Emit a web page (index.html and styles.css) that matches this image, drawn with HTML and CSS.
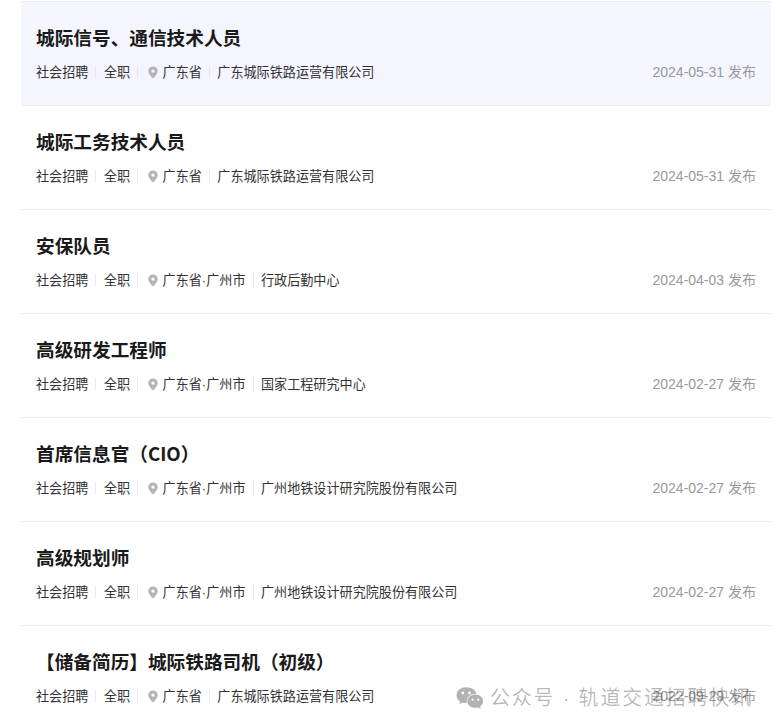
FILE: index.html
```html
<!DOCTYPE html>
<html lang="zh">
<head>
<meta charset="utf-8">
<title>职位列表</title>
<link rel="stylesheet" href="styles.css">
</head>
<body>
<svg class="defs" width="0" height="0"><defs><symbol id="pin" viewBox="0 0 12 13"><path fill="#b4b4b4" fill-rule="evenodd" d="M6 .4a4.700 4.700 0 0 1 4.700 4.700c0 2.700-2.700 5.600-4.700 7.500C4 10.700 1.300 7.800 1.300 5.100A4.700 4.700 0 0 1 6 .4zm0 3a1.700 1.700 0 1 0 0 3.400 1.700 1.700 0 0 0 0-3.400z"/></symbol></defs></svg>
<main class="list">
  <article class="job active">
    <h2 class="title">城际信号、通信技术人员</h2>
    <div class="meta"><span class="tag">社会招聘</span><i class="sep"></i><span class="tag">全职</span><i class="sep"></i><svg class="pin"><use href="#pin"/></svg><span class="tag">广东省</span><i class="sep"></i><span class="tag">广东城际铁路运营有限公司</span><span class="date">2024-05-31 发布</span></div>
  </article>
  <article class="job">
    <h2 class="title">城际工务技术人员</h2>
    <div class="meta"><span class="tag">社会招聘</span><i class="sep"></i><span class="tag">全职</span><i class="sep"></i><svg class="pin"><use href="#pin"/></svg><span class="tag">广东省</span><i class="sep"></i><span class="tag">广东城际铁路运营有限公司</span><span class="date">2024-05-31 发布</span></div>
  </article>
  <article class="job">
    <h2 class="title">安保队员</h2>
    <div class="meta"><span class="tag">社会招聘</span><i class="sep"></i><span class="tag">全职</span><i class="sep"></i><svg class="pin"><use href="#pin"/></svg><span class="tag">广东省<span class="dot">·</span>广州市</span><i class="sep"></i><span class="tag">行政后勤中心</span><span class="date">2024-04-03 发布</span></div>
  </article>
  <article class="job">
    <h2 class="title">高级研发工程师</h2>
    <div class="meta"><span class="tag">社会招聘</span><i class="sep"></i><span class="tag">全职</span><i class="sep"></i><svg class="pin"><use href="#pin"/></svg><span class="tag">广东省<span class="dot">·</span>广州市</span><i class="sep"></i><span class="tag">国家工程研究中心</span><span class="date">2024-02-27 发布</span></div>
  </article>
  <article class="job">
    <h2 class="title">首席信息官（CIO）</h2>
    <div class="meta"><span class="tag">社会招聘</span><i class="sep"></i><span class="tag">全职</span><i class="sep"></i><svg class="pin"><use href="#pin"/></svg><span class="tag">广东省<span class="dot">·</span>广州市</span><i class="sep"></i><span class="tag">广州地铁设计研究院股份有限公司</span><span class="date">2024-02-27 发布</span></div>
  </article>
  <article class="job">
    <h2 class="title">高级规划师</h2>
    <div class="meta"><span class="tag">社会招聘</span><i class="sep"></i><span class="tag">全职</span><i class="sep"></i><svg class="pin"><use href="#pin"/></svg><span class="tag">广东省<span class="dot">·</span>广州市</span><i class="sep"></i><span class="tag">广州地铁设计研究院股份有限公司</span><span class="date">2024-02-27 发布</span></div>
  </article>
  <article class="job">
    <h2 class="title">【储备简历】城际铁路司机（初级）</h2>
    <div class="meta"><span class="tag">社会招聘</span><i class="sep"></i><span class="tag">全职</span><i class="sep"></i><svg class="pin"><use href="#pin"/></svg><span class="tag">广东省</span><i class="sep"></i><span class="tag">广东城际铁路运营有限公司</span><span class="date">2022-09-29 发布</span></div>
  </article>
</main>
<div class="watermark">
  <svg class="wechat" viewBox="0 0 30 24"><path fill="#b2b2b2" d="M11 1C5.200 1 .5 4.800.5 9.500c0 2.700 1.500 5 3.900 6.600l-1 3 3.500-1.800c1.200.4 2.600.6 4 .6h.8a7 7 0 0 1-.3-2c0-4.500 4.300-8 9.600-8h.8C20.900 4 16.400 1 11 1z"/><path fill="#b2b2b2" d="M20.800 8.900c-4.800 0-8.700 3.200-8.700 7.100s3.900 7.100 8.700 7.100c1 0 2-.1 2.900-.4l2.900 1.500-.8-2.500c2-1.300 3.200-3.400 3.200-5.700 0-3.900-3.400-7.100-8.200-7.100z"/><circle cx="7.400" cy="7.200" r="1.500" fill="#fff"/><circle cx="14.400" cy="7.200" r="1.500" fill="#fff"/><circle cx="17.800" cy="14.400" r="1.200" fill="#fff"/><circle cx="23.800" cy="14.400" r="1.200" fill="#fff"/></svg>
  <span class="wm-text">公众号<span class="wm-dot"> · </span>轨道交通招聘快讯</span>
</div>
</body>
</html>
```

FILE: styles.css
```css
html, body {
  margin: 0;
  padding: 0;
  background: #fff;
}
body {
  height: 728px;
  overflow: hidden;
  position: relative;
  font-family: "Noto Sans CJK SC", "Liberation Sans", sans-serif;
}
.defs {
  position: absolute;
}
.list {
  margin: 1px 6px 0 21px;
  border-top: 1px solid #eeeeee;
}
.job {
  box-sizing: border-box;
  height: 104px;
  padding: 20px 15px 0;
  border-bottom: 1px solid #eeeeee;
}
.job.active {
  background: #f4f5ff;
}
.title {
  margin: 0;
  font-size: 18.67px;
  line-height: 30px;
  font-weight: 700;
  color: #1a1a1a;
}
.meta {
  display: flex;
  align-items: center;
  height: 20px;
  margin-top: 10px;
  font-size: 13.1px;
  line-height: 20px;
  color: #333;
}
.dot {
  font-family: "Liberation Sans", sans-serif;
}
.sep {
  width: 1px;
  height: 12px;
  margin: 0 7.5px 0 7px;
  background: #e8e8e8;
}
.pin {
  width: 12px;
  height: 13px;
  margin: 0 4px 0 1px;
}
.date {
  margin-left: auto;
  font-family: "Liberation Sans", "Noto Sans CJK SC", sans-serif;
  font-size: 14px;
  color: #999;
}
.watermark {
  position: absolute;
  left: 456px;
  top: 685px;
  display: flex;
  align-items: center;
  gap: 6px;
  height: 24px;
}
.wechat {
  width: 28px;
  height: 23px;
}
.wm-text {
  font-size: 20px;
  line-height: 24px;
  letter-spacing: 1.8px;
  color: rgba(0, 0, 0, 0.28);
  white-space: pre;
}
.wm-dot {
  font-family: "Liberation Sans", sans-serif;
}
```
